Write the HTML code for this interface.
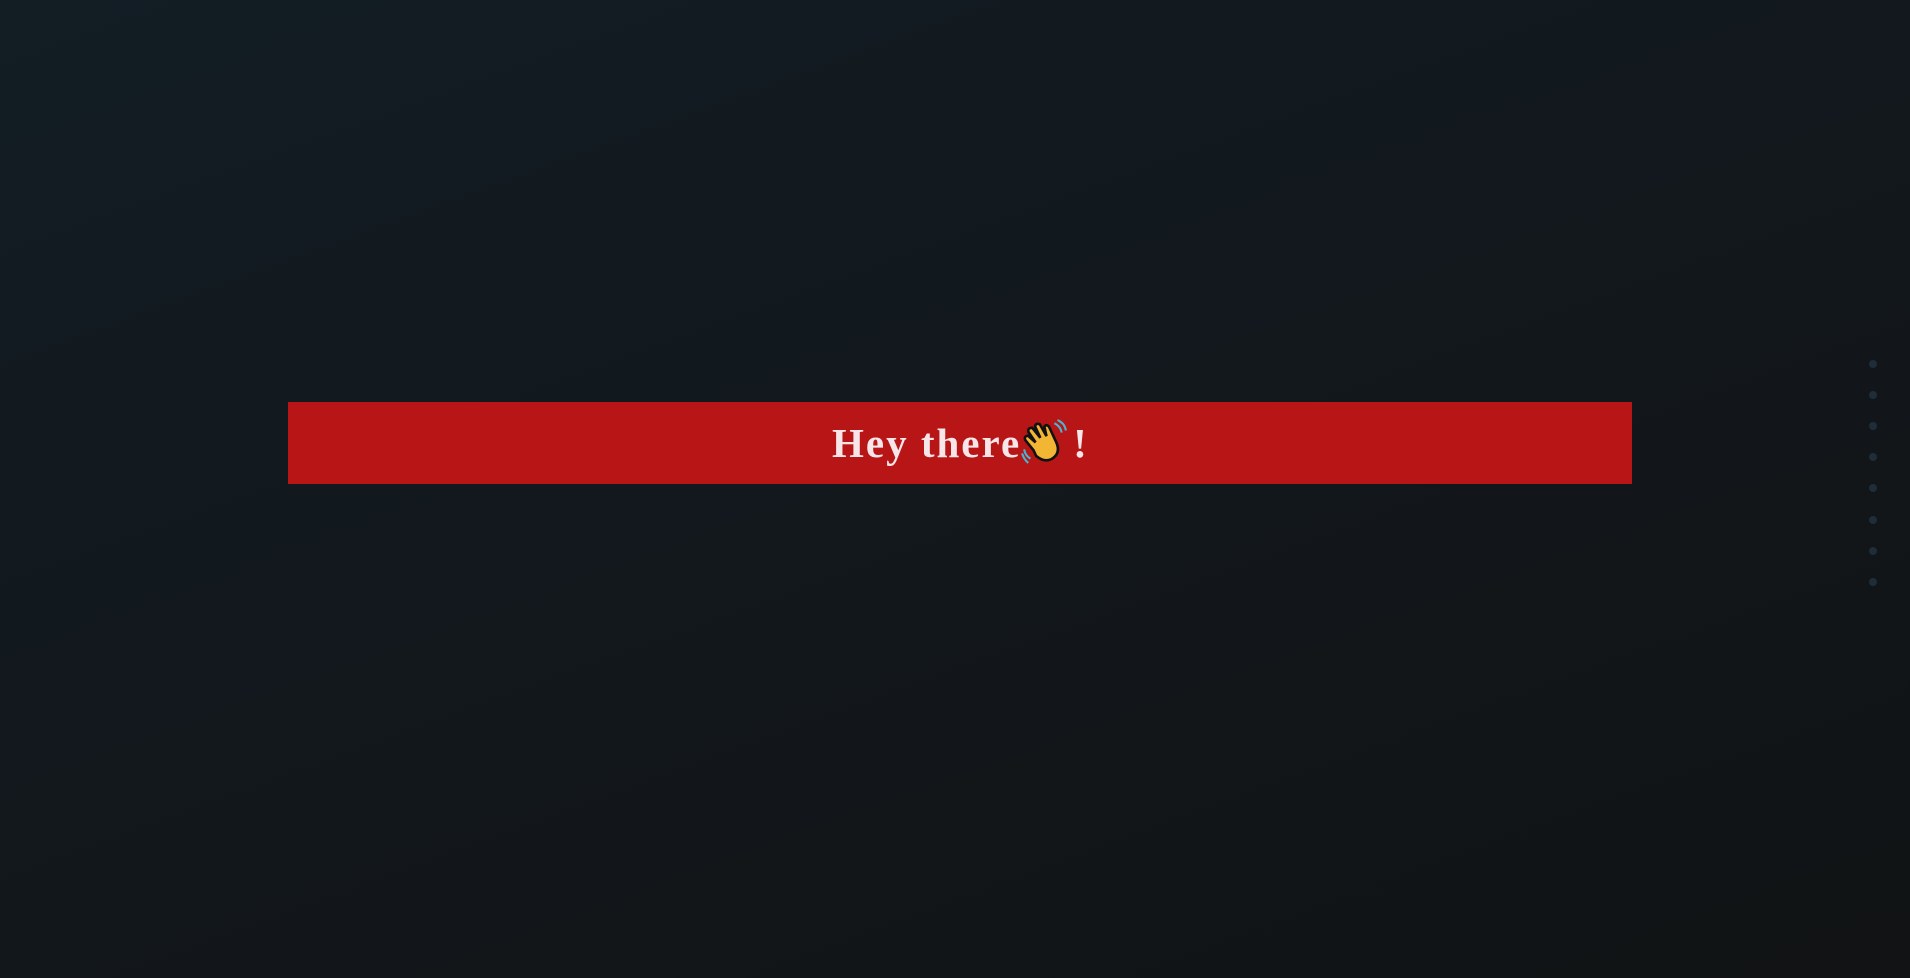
<!DOCTYPE html>
<html><head><meta charset="utf-8"><style>
html,body{margin:0;padding:0;}
body{width:1910px;height:978px;overflow:hidden;background:linear-gradient(160deg,#121d24 0%,#12181d 45%,#111314 100%);position:relative;font-family:"Liberation Serif",serif;}
.banner{position:absolute;left:288px;top:402px;width:1344px;height:82px;background:#b81616;}
.txt{position:absolute;left:832px;top:413px;color:#f6e6ea;font-size:41px;font-weight:bold;letter-spacing:2px;white-space:nowrap;line-height:60px;}
.dot{position:absolute;left:1869px;width:8px;height:8px;border-radius:50%;background:#1e2d38;}
</style></head><body>
<div class="banner"></div>
<div class="txt">Hey there<svg width="48" height="48" viewBox="0 0 46 46" style="vertical-align:-9px;margin:0 4px 0 0"><g transform="rotate(-25 22 24)"><path d="M10 26 L7 14 Q7 10 11 11 L15 20 L13 8 Q14 4 18 6 L21 18 L21 6 Q23 3 26 6 L27 19 L29 10 Q32 8 33 12 L33 28 Q33 40 22 41 Q14 41 10 32 Z" fill="#f2b534" stroke="#111" stroke-width="2.5"/></g><path d="M32 5 Q38 8 39 14 M35 2 Q42 5 43 12" stroke="#4bb3d0" stroke-width="2" fill="none"/><path d="M3 30 Q4 36 9 39 M1 34 Q3 40 7 43" stroke="#4bb3d0" stroke-width="2" fill="none"/></svg>!</div>
<div class="dot" style="top:360px"></div>
<div class="dot" style="top:391px"></div>
<div class="dot" style="top:422px"></div>
<div class="dot" style="top:453px"></div>
<div class="dot" style="top:484px"></div>
<div class="dot" style="top:516px"></div>
<div class="dot" style="top:547px"></div>
<div class="dot" style="top:578px"></div>
</body></html>
